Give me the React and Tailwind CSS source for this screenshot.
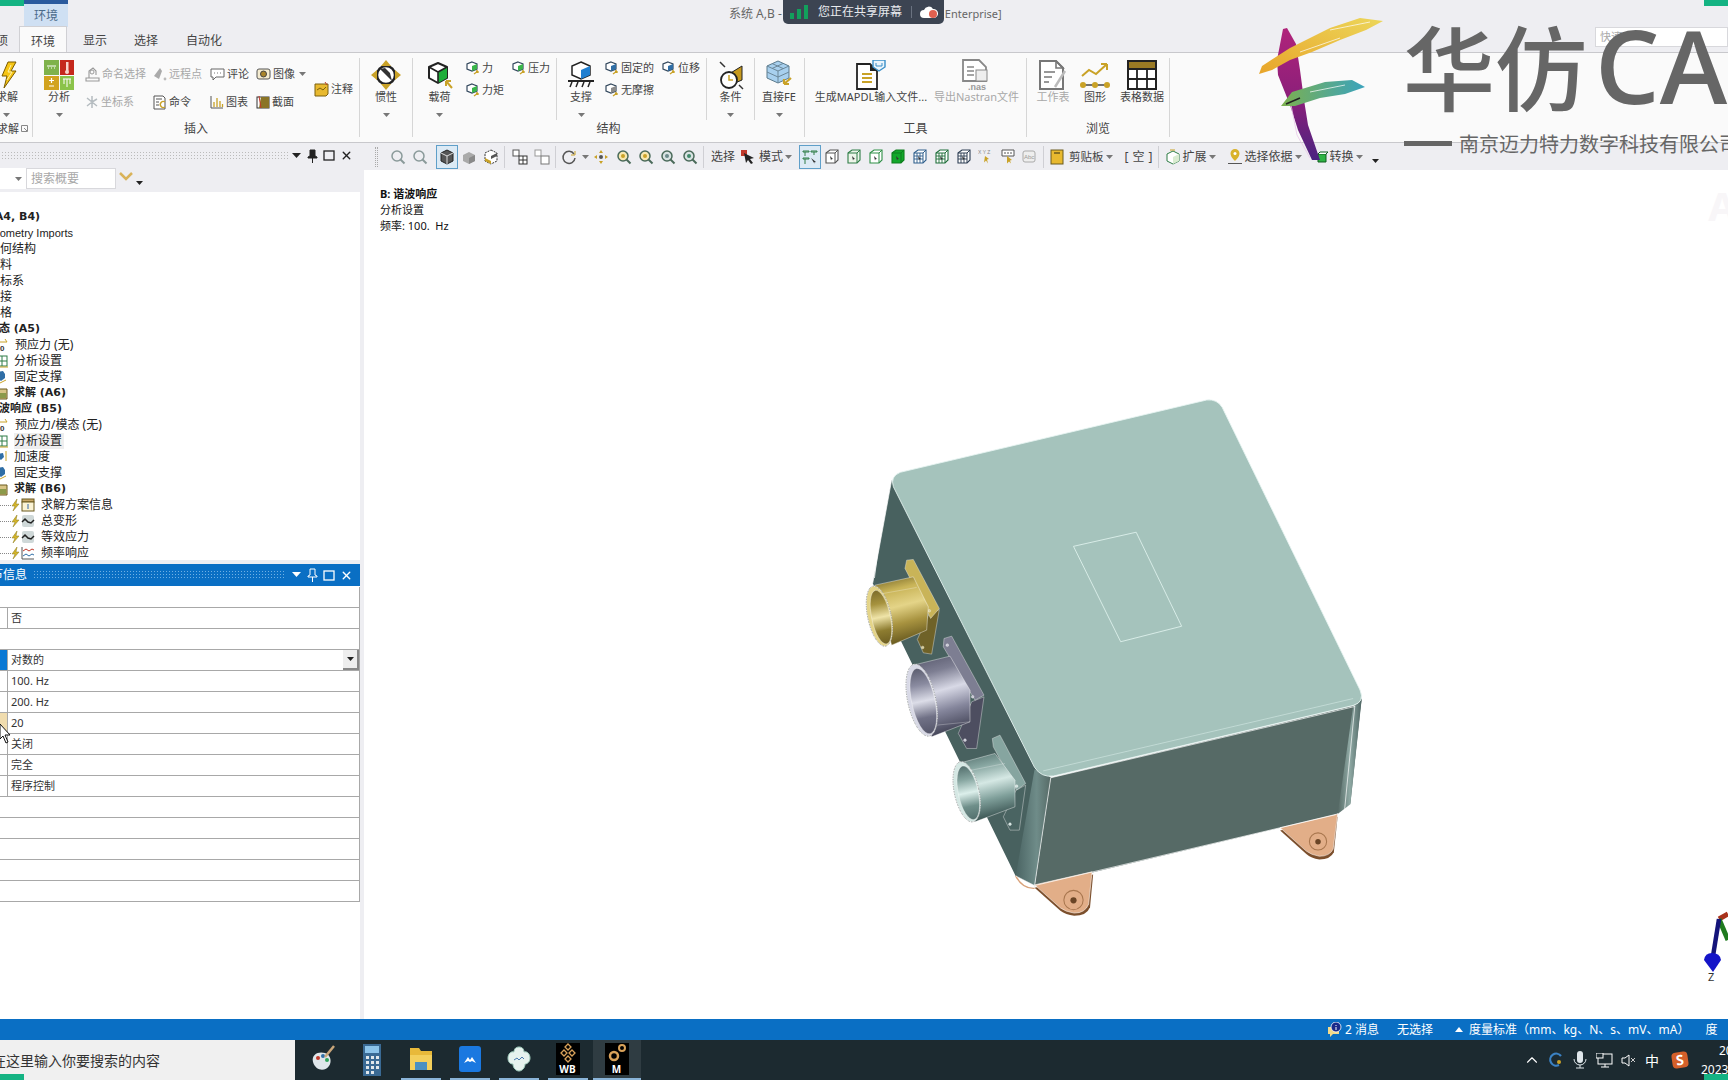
import React from 'react'
import { ChevronUp, X } from 'lucide-react'

const Svg = ({ w = 16, h = 16, vb, children }) => (
  <svg width={w} height={h} viewBox={vb || `0 0 ${w} ${h}`} className="block shrink-0">{children}</svg>
)

// ---- small drawn icons ----
const Caret = ({ dark }) => (
  <svg width="7" height="4" viewBox="0 0 7 4" className="block shrink-0"><path d="M0 0h7L3.5 4z" fill={dark ? '#222' : '#777'} /></svg>
)

const MiniCube = ({ face = '#39b54a', mark = '#c9a227' }) => (
  <Svg w={14} h={14}>
    <path d="M6 1l5 2v5l-5 2-5-2V3z" fill="#fff" stroke="#34495e" strokeWidth="1.2" />
    <path d="M6 5l5-2v5l-5 2z" fill={face} />
    <path d="M8 13l4-3M12 10l-2 0M12 10l0 2" stroke={mark} strokeWidth="1.3" fill="none" />
  </Svg>
)

const BigCube = ({ face = '#1fae3b', top = '#fff' }) => (
  <Svg w={26} h={28}>
    <path d="M11 2l9 4v11l-9 5-9-5V6z" fill={top} stroke="#222" strokeWidth="2" strokeLinejoin="round" />
    <path d="M11 11l9-5v11l-9 5z" fill={face} />
    <path d="M2 6l9 5 9-5M11 11v11" stroke="#222" strokeWidth="1.6" fill="none" />
    <path d="M25 27l-6-7M19 20h5M19 20v5" stroke="#c9a227" strokeWidth="2" fill="none" />
  </Svg>
)

const Mag = ({ c = '#8a9a9a', fill = 'none', mark }) => (
  <Svg w={16} h={16}>
    <circle cx="7" cy="7" r="5" fill={fill} stroke={c} strokeWidth="1.5" />
    <path d="M10.5 10.5l4 4" stroke={c} strokeWidth="2" />
    {mark && <circle cx="7" cy="7" r="2" fill={mark} />}
  </Svg>
)

const SelBox = ({ c = '#39a845', fill = '#fff', grid }) => (
  <Svg w={16} h={16}>
    <path d="M2 4l4-3h8v10l-3 3H2z" fill={fill} stroke={c} strokeWidth="1.1" />
    <path d="M2 4h9v10M11 4l3-3" stroke={c} strokeWidth="1" fill="none" />
    {grid && <path d="M5 4v10M8 4v10M2 7h9M2 10h9" stroke={c} strokeWidth="0.9" />}
    <path d="M6 7l3 3-1.5.3L7 11.5z" fill="#333" />
  </Svg>
)

const Lightning = () => (
  <Svg w={18} h={28}>
    <path d="M9 1h8l-5 9h5L5 27l3-12H3z" fill="#f6c515" stroke="#7a5b00" strokeWidth="1" />
    <path d="M12 4l-3 7h4L8 19" stroke="#fff2a8" strokeWidth="1" fill="none" />
  </Svg>
)

const AnalysisIcon = () => (
  <Svg w={30} h={30}>
    <rect x="0" y="0" width="15" height="15" fill="#7fb24b" />
    <rect x="16" y="0" width="14" height="15" fill="#c5281c" />
    <rect x="0" y="16" width="15" height="14" fill="#d2a31f" />
    <rect x="16" y="16" width="14" height="14" fill="#8bc34a" />
    <path d="M3 6h9M4 8h1M7 8h1M10 8h1" stroke="#fff" strokeWidth="1" />
    <rect x="22" y="2" width="2.5" height="9" fill="#f8d5cc" /><circle cx="23" cy="12" r="2" fill="#f8d5cc" />
    <path d="M7.500 18v5M5 20.500h5M5 26h5" stroke="#fff" strokeWidth="1.2" />
    <path d="M19 19h8M20 19v5M23 19v8M26 19v5" stroke="#fff" strokeWidth="1" />
  </Svg>
)

const NamedSel = () => (
  <Svg w={15} h={15}>
    <path d="M1 11h13v3H1zM4 11V4l4-3 3 3v4" fill="none" stroke="#999" strokeWidth="1.1" />
    <circle cx="7" cy="5" r="2" fill="none" stroke="#999" />
  </Svg>
)
const RemotePt = () => (
  <Svg w={14} h={14}><path d="M1 9l6-8 2 3-3 8z" fill="#aaa" /><circle cx="12" cy="12" r="1.400" fill="#bbb" /></Svg>
)
const Comment = () => (
  <Svg w={15} h={14}><path d="M1 2h13v8H6l-3 3v-3H1z" fill="#fff" stroke="#666" /><path d="M4 6h1M7 6h1M10 6h1" stroke="#777" /></Svg>
)
const Camera = () => (
  <Svg w={15} h={14}><rect x="1" y="2" width="13" height="10" rx="2" fill="#f5ecd0" stroke="#555" /><circle cx="7.500" cy="7" r="3" fill="#a9842a" stroke="#444" /></Svg>
)
const CoordSys = () => (
  <Svg w={14} h={14}><path d="M7 7V1M7 7l5-3M7 7l5 4M7 7v6M7 7L2 11M7 7L2 3" stroke="#b5bcc0" strokeWidth="1.5" /></Svg>
)
const CommandI = () => (
  <Svg w={14} h={15}><path d="M1 1h9l2 2v11H1z" fill="#fff" stroke="#555" /><path d="M3 4h6M3 7h3M3 10h3" stroke="#555" /><path d="M12 7a3 3 0 1 0 0 5" stroke="#c9a227" strokeWidth="1.400" fill="none" /></Svg>
)
const ChartI = () => (
  <Svg w={14} h={14}><path d="M1 1v12h12" stroke="#555" fill="none" /><path d="M4 12V7M7 12V3M10 12V6M12.500 12V9" stroke="#c9a227" strokeWidth="1.300" /></Svg>
)
const SectionI = () => (
  <Svg w={14} h={14}><rect x="1" y="2" width="12" height="11" fill="#fff" stroke="#333" /><path d="M5 2h8v11H3z" fill="#8a7426" /><path d="M3 1l2 12" stroke="#c0392b" /></Svg>
)
const NoteI = () => (
  <Svg w={15} h={15}><path d="M1 2h13v10l-2 2H1z" fill="#e8b92f" stroke="#7a6010" /><path d="M3 8l3-2 3 2 3-3" stroke="#7a6010" fill="none" /><path d="M11 0l2 3" stroke="#c0392b" /></Svg>
)
const InertiaI = () => (
  <Svg w={30} h={30}>
    <circle cx="15" cy="15" r="9" fill="#fff" stroke="#222" strokeWidth="2.400" />
    <path d="M9 9l5 5 7 7-2-8-5-5z" fill="#333" />
    <path d="M15 0l5 6h-10zM15 30l5-6h-10zM0 15l6-5v10zM30 15l-6-5v10z" fill="#c9a227" />
  </Svg>
)
const SupportI = () => (
  <Svg w={28} h={28}>
    <path d="M14 1l9 4v9l-9 4-9-4V5z" fill="#fff" stroke="#222" strokeWidth="1.500" />
    <path d="M14 9l9-4v9l-9 4z" fill="#1f7fd1" />
    <path d="M1 20h26" stroke="#222" strokeWidth="2" />
    <path d="M5 21l-2 5M11 21l-2 5M17 21l-2 5M23 21l-2 5" stroke="#222" strokeWidth="1.500" />
  </Svg>
)
const ConditionI = () => (
  <Svg w={26} h={30}>
    <path d="M2 2l5 5" stroke="#333" strokeWidth="1.500" />
    <path d="M11 14L24 6v14l-7 3z" fill="#c79a1e" stroke="#222" />
    <circle cx="11" cy="20" r="8" fill="#fff" stroke="#222" strokeWidth="1.800" />
    <path d="M11 15v5h4" stroke="#c9a227" strokeWidth="1.500" fill="none" />
    <path d="M25 29l-4-4" stroke="#333" strokeWidth="1.500" />
  </Svg>
)
const DirectFE = () => (
  <Svg w={26} h={30}>
    <path d="M12 1l11 5v12l-11 5-11-5V6z" fill="#a8d0ee" stroke="#5a7a8c" />
    <path d="M1 6l11 5 11-5M12 11v12M6 3.500l11 5M17 3.500l-11 5M1 12l11 5 11-5" stroke="#6b8799" fill="none" />
    <path d="M25 18l-7 6M18 24h5M18 24v-5" stroke="#c9a227" strokeWidth="2.200" fill="none" />
  </Svg>
)
const MapdlI = () => (
  <Svg w={30} h={30}>
    <path d="M1 4h13l7 7v18H1z" fill="#fff" stroke="#222" strokeWidth="1.800" />
    <path d="M14 4v7h7z" fill="#222" />
    <path d="M6 14h10M6 18h10M6 22h10" stroke="#c9a227" strokeWidth="2" />
    <path d="M17 0h12v7l-6 4-6-4z" fill="#eaf4fb" stroke="#3a8fc8" strokeWidth="1.400" />
    <path d="M20 3v3h6V3" stroke="#3a8fc8" fill="none" />
  </Svg>
)
const NastranI = () => (
  <Svg w={30} h={32}>
    <path d="M1 1h16l7 7v14H1z" fill="#fff" stroke="#888" strokeWidth="1.800" />
    <path d="M5 8h7M5 12h7M5 16h7" stroke="#888" strokeWidth="1.400" />
    <rect x="14" y="11" width="11" height="11" fill="#eee" stroke="#888" />
    <text x="6" y="31" fontSize="9" fontWeight="700" fill="#999" fontFamily="Liberation Sans">.nas</text>
  </Svg>
)
const SheetI = () => (
  <Svg w={28} h={30}>
    <path d="M1 1h16l7 7v21H1z" fill="#fff" stroke="#777" strokeWidth="2" />
    <path d="M17 1v7h7zM5 12h11M5 17h8M5 22h5" stroke="#777" strokeWidth="1.600" fill="none" />
    <path d="M26 11L16 27" stroke="#bbb" strokeWidth="2.500" />
  </Svg>
)
const GraphI = () => (
  <Svg w={30} h={30}>
    <path d="M2 16l7-6 7 4 11-10M27 4h-6M27 4v6" stroke="#c9a227" strokeWidth="2" fill="none" />
    <path d="M1 25h28" stroke="#444" strokeWidth="1.500" />
    <circle cx="3" cy="25" r="3" fill="#c9a227" /><circle cx="15" cy="25" r="3" fill="#c9a227" /><circle cx="27" cy="25" r="3" fill="#c9a227" />
  </Svg>
)
const TableI = () => (
  <Svg w={30} h={30}>
    <rect x="1" y="1" width="28" height="28" fill="#fff" stroke="#222" strokeWidth="2" />
    <rect x="1" y="1" width="28" height="8" fill="#9a7a24" stroke="#222" strokeWidth="2" />
    <path d="M10 9v20M20 9v20M1 19h28" stroke="#222" strokeWidth="1.800" />
  </Svg>
)

// ---- tree icons ----
const TPre = () => (
  <Svg w={8} h={14}><path d="M0 4h7M5 1l2 3" stroke="#c9a227" /><text x="0" y="13" fontSize="8" fontWeight="700" fill="#333" fontFamily="Liberation Sans">0</text></Svg>
)
const TSet = () => (
  <Svg w={9} h={14}><rect x="-2" y="2" width="9" height="10" fill="#fff" stroke="#2e7d46" /><path d="M2 2v10M-2 7h9" stroke="#2e7d46" /><path d="M-2 13h10" stroke="#c9a227" /></Svg>
)
const TFix = () => (
  <Svg w={9} h={14}><path d="M-2 2l5-1 2 3v4l-4 3-3-2z" fill="#2f6ea6" /><path d="M0 13l6-3" stroke="#c9a227" /></Svg>
)
const TAcc = () => (
  <Svg w={9} h={14}><path d="M-2 4l5-1 1 4-3 3-3-2z" fill="#2f6ea6" /><path d="M6 1v10" stroke="#c9a227" /></Svg>
)
const TSol = () => (
  <Svg w={9} h={14}><path d="M-1 3h8v10h-8z" fill="#d8c486" stroke="#6b5a1e" /><rect x="0" y="7" width="6" height="5" fill="#8b9a4a" /></Svg>
)
const Bolt = () => (
  <Svg w={9} h={14}><path d="M6 1L1 8h3l-2 5 6-7H5z" fill="#d4b52b" stroke="#8a7a1a" strokeWidth="0.500" /></Svg>
)
const RInfo = () => (
  <Svg w={14} h={14}><rect x="1" y="1" width="12" height="3" fill="#c9a86a" stroke="#6b5a1e" /><rect x="1" y="4" width="12" height="9" fill="#fbf3d5" stroke="#6b5a1e" /><path d="M7 6v5" stroke="#3366aa" /></Svg>
)
const RWave = () => (
  <Svg w={14} h={14}><rect x="1" y="1" width="12" height="12" rx="2" fill="#cfd8d8" /><path d="M1 8l3-3 3 3 3 1 3-3" stroke="#222" strokeWidth="1.500" fill="none" /></Svg>
)
const RFreq = () => (
  <Svg w={14} h={14}><path d="M1 1v12h12" stroke="#555" fill="none" /><path d="M2 5l3-2 3 2 3-2 2 1" stroke="#c0392b" fill="none" /><path d="M2 10l3-2 3 2 3-2 2 1" stroke="#2f6ea6" fill="none" /></Svg>
)

const boldRow = "font-bold text-[11px] font-['DejaVu_Sans','Noto_Sans_CJK_SC',sans-serif]"

const treeRows = [
  { text: '模型 (A4, B4)', cls: `-ml-[36px] ${boldRow}` },
  { text: 'Geometry Imports', cls: "-ml-[15px] text-[11px] font-['Liberation_Sans',sans-serif]" },
  { text: '几何结构', cls: '-ml-[12px]' },
  { text: '材料', cls: '-ml-[12px]' },
  { text: '坐标系', cls: '-ml-[12px]' },
  { text: '连接', cls: '-ml-[12px]' },
  { text: '网格', cls: '-ml-[12px]' },
  { text: '模态 (A5)', cls: `-ml-[12px] ${boldRow}` },
  { text: '预应力 (无)', icon: <TPre />, cls: 'ml-[6px]' },
  { text: '分析设置', icon: <TSet />, cls: 'ml-[5px]' },
  { text: '固定支撑', icon: <TFix />, cls: 'ml-[5px]' },
  { text: '求解 (A6)', icon: <TSol />, cls: `ml-[5px] ${boldRow}` },
  { text: '谐波响应 (B5)', cls: `-ml-[12px] ${boldRow}` },
  { text: '预应力/模态 (无)', icon: <TPre />, cls: 'ml-[6px]' },
  { text: '分析设置', icon: <TSet />, cls: 'ml-[5px] bg-[#eeeeee] pr-[2px]' },
  { text: '加速度', icon: <TAcc />, cls: 'ml-[5px]' },
  { text: '固定支撑', icon: <TFix />, cls: 'ml-[5px]' },
  { text: '求解 (B6)', icon: <TSol />, cls: `ml-[5px] ${boldRow}` },
]
const resultRows = [
  { text: '求解方案信息', icon: <RInfo /> },
  { text: '总变形', icon: <RWave /> },
  { text: '等效应力', icon: <RWave /> },
  { text: '频率响应', icon: <RFreq /> },
]

const detailRows = [
  { v: '' },
  { v: '否', sep: true },
  { v: '' },
  { v: '对数的', sep: true, blue: true, combo: true },
  { v: '100. Hz', sep: true },
  { v: '200. Hz', sep: true },
  { v: '20', sep: true, hot: true },
  { v: '关闭', sep: true },
  { v: '完全', sep: true },
  { v: '程序控制', sep: true },
  { v: '' }, { v: '' }, { v: '' }, { v: '' }, { v: '' },
]

// ---- ribbon pieces ----
const BigBtn = ({ w, icon, label, gray, caret = true }) => (
  <div className={`flex flex-col items-center pt-[2px] ${w}`}>
    <div className="h-[30px] flex items-center justify-center">{icon}</div>
    <div className={`h-[14px] leading-[14px] whitespace-nowrap ${gray ? 'text-[#a8a8a8]' : 'text-[#444]'}`}>{label}</div>
    {caret && <div className="mt-[9px]"><Caret /></div>}
  </div>
)

const Small = ({ icon, label, gray, caret, cls = '' }) => (
  <div className={`flex items-center gap-[2px] whitespace-nowrap ${gray ? 'text-[#a8a8a8]' : 'text-[#444]'} ${cls}`}>
    {icon}<span>{label}</span>{caret && <span className="ml-[2px]"><Caret /></span>}
  </div>
)

const GroupLabel = ({ children }) => (
  <div className="h-[17px] leading-[17px] text-center text-[#444] text-[12px]">{children}</div>
)

const Ribbon = () => (
  <div className="h-[90px] bg-[#fafafa] border-b border-[#c8c8cc] flex py-[5px] text-[11px] shrink-0">
    {/* solve */}
    <div className="w-[33px] border-r border-[#d6d6d6] flex flex-col">
      <div className="h-[62px] -ml-[1px] relative">
        <div className="pt-[2px]">
          <div className="h-[30px] flex items-center"><Lightning /></div>
          <div className="h-[14px] leading-[14px] text-[#444] -ml-[3px]">求解</div>
          <div className="mt-[9px] ml-[4px]"><Caret /></div>
        </div>
      </div>
      <div className="h-[17px] leading-[17px] text-[#444] text-[11px] flex items-center -ml-[3px] gap-[2px]">
        <span>求解</span>
        <svg width="7" height="7" viewBox="0 0 7 7" className="block shrink-0"><path d="M0.500 0.500h6v6h-6zM3 3l3 3" stroke="#888" fill="none" /></svg>
      </div>
    </div>
    {/* insert */}
    <div className="w-[327px] border-r border-[#d6d6d6] flex flex-col">
      <div className="h-[62px] flex">
        <BigBtn w="w-[52px]" icon={<AnalysisIcon />} label="分析" />
        <div className="grid grid-cols-[68px_57px_46px_58px] grid-rows-[28px_28px] pt-[2px]">
          <Small icon={<NamedSel />} label="命名选择" gray />
          <Small icon={<RemotePt />} label="远程点" gray />
          <Small icon={<Comment />} label="评论" />
          <Small icon={<Camera />} label="图像" caret />
          <Small icon={<CoordSys />} label="坐标系" gray />
          <Small icon={<CommandI />} label="命令" />
          <Small icon={<ChartI />} label="图表" />
          <Small icon={<SectionI />} label="截面" />
        </div>
        <Small icon={<NoteI />} label="注释" cls="h-[60px] pt-[2px]" />
      </div>
      <GroupLabel>插入</GroupLabel>
    </div>
    {/* inertia */}
    <div className="w-[53px] border-r border-[#d6d6d6] flex flex-col">
      <BigBtn w="w-full" icon={<InertiaI />} label="惯性" />
    </div>
    {/* structure */}
    <div className="w-[392px] border-r border-[#d6d6d6] flex flex-col">
      <div className="h-[62px] flex">
        <BigBtn w="w-[53px]" icon={<BigCube />} label="载荷" />
        <div className="w-[46px] flex flex-col gap-[6px] pt-[2px]">
          <Small icon={<MiniCube />} label="力" cls="h-[16px]" />
          <Small icon={<MiniCube />} label="力矩" cls="h-[16px]" />
        </div>
        <div className="w-[45px] border-r border-[#d6d6d6] pt-[2px]">
          <Small icon={<MiniCube />} label="压力" cls="h-[16px]" />
        </div>
        <BigBtn w="w-[48px]" icon={<SupportI />} label="支撑" />
        <div className="w-[57px] flex flex-col gap-[6px] pt-[2px]">
          <Small icon={<MiniCube face="#2f6ea6" />} label="固定的" cls="h-[16px]" />
          <Small icon={<MiniCube face="#8a8a8a" />} label="无摩擦" cls="h-[16px]" />
        </div>
        <div className="w-[45px] border-r border-[#d6d6d6] pt-[2px]">
          <Small icon={<MiniCube face="#2f6ea6" />} label="位移" cls="h-[16px]" />
        </div>
        <div className="border-r border-[#d6d6d6]"><BigBtn w="w-[47px]" icon={<ConditionI />} label="条件" /></div>
        <BigBtn w="w-[48px]" icon={<DirectFE />} label="直接FE" />
      </div>
      <GroupLabel>结构</GroupLabel>
    </div>
    {/* tools */}
    <div className="w-[222px] border-r border-[#d6d6d6] flex flex-col">
      <div className="h-[62px] flex pl-[9px] gap-[6px]">
        <BigBtn w="w-[114px]" icon={<MapdlI />} label="生成MAPDL输入文件..." caret={false} />
        <BigBtn w="w-[85px]" icon={<NastranI />} label="导出Nastran文件" gray caret={false} />
      </div>
      <GroupLabel>工具</GroupLabel>
    </div>
    {/* browse */}
    <div className="w-[143px] border-r border-[#d6d6d6] flex flex-col">
      <div className="h-[62px] flex pl-[9px] gap-[10px]">
        <BigBtn w="w-[34px]" icon={<SheetI />} label="工作表" gray caret={false} />
        <BigBtn w="w-[30px]" icon={<GraphI />} label="图形" caret={false} />
        <BigBtn w="w-[44px]" icon={<TableI />} label="表格数据" caret={false} />
      </div>
      <GroupLabel>浏览</GroupLabel>
    </div>
  </div>
)

// ---- graphics toolbar ----
const Slot = ({ children, active, cls = '' }) => (
  <div className={`w-[22px] h-[24px] flex items-center justify-center shrink-0 ${active ? 'border border-[#5f9fc9] bg-[#dceaf5]' : ''} ${cls}`}>{children}</div>
)
const TSep = ({ cls = '' }) => <div className={`w-px h-[22px] bg-[#cfcfd4] shrink-0 ${cls}`} />

const Toolbar = () => (
  <div className="h-[27px] flex items-center text-[12px] text-[#444] whitespace-nowrap shrink-0">
    <div className="ml-[11px] w-[3px] h-[20px] border-x border-dotted border-[#aaa]" />
    <div className="ml-[9px] flex"><Slot><Mag /></Slot><Slot><Mag /></Slot></div>
    <Slot active cls="ml-[5px]"><Svg w={16} h={16}><path d="M8 1l6 3v8l-6 3-6-3V4z" fill="#555" stroke="#222" /><path d="M2 4l6 3 6-3M8 7v8" stroke="#ddd" fill="none" /></Svg></Slot>
    <Slot><Svg w={16} h={16}><path d="M8 3l6 3v6l-6 3-6-3V6z" fill="#aaa" /><path d="M8 9l6-3v6l-6 3z" fill="#8a8a8a" /></Svg></Slot>
    <Slot><Svg w={16} h={16}><path d="M8 1l6 3v8l-6 3-6-3V4z" fill="#fff" stroke="#333" strokeDasharray="2 1" /><path d="M2 9l6 3v3l-6-3z" fill="#c9a227" /><path d="M8 7l6-3v3l-6 3z" fill="#555" /></Svg></Slot>
    <TSep cls="ml-[2px]" />
    <Slot cls="ml-[4px]"><Svg w={16} h={16}><rect x="1" y="1" width="6" height="6" fill="#fff" stroke="#555" /><rect x="7" y="7" width="8" height="8" fill="#fff" stroke="#333" /><path d="M7 11h8M11 7v8" stroke="#333" /></Svg></Slot>
    <Slot><Svg w={16} h={16}><rect x="1" y="1" width="6" height="6" fill="#fff" stroke="#999" /><rect x="7" y="7" width="8" height="8" fill="#fff" stroke="#777" /></Svg></Slot>
    <TSep cls="ml-[2px]" />
    <Slot cls="ml-[2px]"><Svg w={16} h={16}><path d="M13 5a6 6 0 1 0 1 4" fill="none" stroke="#555" strokeWidth="1.500" /><path d="M14 2v4h-4" fill="none" stroke="#c9a227" /></Svg></Slot>
    <div className="w-[10px] flex justify-center"><Caret /></div>
    <Slot><Svg w={16} h={16}><path d="M8 1l2 3H6zM8 15l2-3H6zM1 8l3-2v4zM15 8l-3-2v4z" fill="#c9a227" /><circle cx="8" cy="8" r="2" fill="#555" /></Svg></Slot>
    <Slot cls="ml-px"><Mag c="#4a6a5a" fill="#f8e8b0" mark="#c9a227" /></Slot>
    <Slot><Mag c="#4a6a5a" fill="#f8e8b0" mark="#c9a227" /></Slot>
    <Slot><Mag c="#4a6a5a" fill="#d8e2e2" mark="#6b8a8a" /></Slot>
    <Slot><Mag c="#4a6a5a" fill="#d8e2e2" mark="#3f8a6a" /></Slot>
    <TSep cls="ml-[2px]" />
    <span className="ml-[7px]">选择</span>
    <div className="ml-[6px] w-[14px]"><Svg w={14} h={14}><rect x="0" y="0" width="6" height="6" fill="#c0392b" /><path d="M3 3l10 5-4 1 3 4-2 1-3-4-2 3z" fill="#222" /></Svg></div>
    <span className="ml-[4px]">模式</span>
    <span className="ml-[2px]"><Caret /></span>
    <Slot active cls="ml-[7px]"><Svg w={16} h={16}><path d="M1 2h6v1H1zM9 2h6v1H9zM1 9h6v1H1zM3 3v4M12 3v3M3 10v5" stroke="#2e7d46" fill="none" /><path d="M9 9l5 4-2 .5 1 2z" fill="#333" /></Svg></Slot>
    <Slot><SelBox c="#555" /></Slot>
    <Slot><SelBox c="#2e7d46" fill="#eef5ea" /></Slot>
    <Slot><SelBox c="#2e8f46" /></Slot>
    <Slot><SelBox c="#0f7d1e" fill="#12a82a" /></Slot>
    <Slot><SelBox c="#2f5f8c" grid /></Slot>
    <Slot><SelBox c="#1f6f3a" grid /></Slot>
    <Slot><SelBox c="#2e3f55" grid /></Slot>
    <Slot><Svg w={16} h={16}><text x="0" y="5" fontSize="5" fill="#888" fontFamily="Liberation Sans">X Y Z</text><path d="M7 7l4 3-2 .5 1 4-2-3-2 2z" fill="#c9a227" /></Svg></Slot>
    <Slot><Svg w={16} h={16}><path d="M2 1h12v6H2z" fill="#fff" stroke="#555" /><path d="M4 4h8" stroke="#555" strokeDasharray="2 1" /><path d="M7 7l5 4-2 .5 1 3-2-2-2 2z" fill="#c9a227" /></Svg></Slot>
    <Slot><Svg w={16} h={16}><rect x="1" y="2" width="12" height="11" rx="2" fill="#eee" stroke="#aaa" /><text x="2" y="10" fontSize="6" fill="#999" fontFamily="Liberation Sans">Abc</text></Svg></Slot>
    <TSep cls="ml-[2px]" />
    <div className="ml-[6px] w-[14px]"><Svg w={14} h={16}><rect x="1" y="1" width="12" height="14" fill="#e8b92f" stroke="#6b5a1e" /><path d="M4 4h6" stroke="#6b5a1e" strokeWidth="1.500" /></Svg></div>
    <span className="ml-[5px] text-[11.500px]">剪贴板</span>
    <span className="ml-[2px]"><Caret /></span>
    <span className="ml-[12px] w-[28px] flex justify-between"><span>[</span><span>空</span><span>]</span></span>
    <TSep cls="ml-[5px]" />
    <div className="ml-[7px] w-[15px]"><Svg w={15} h={16}><path d="M7 2l6 3v7l-6 3-6-3V5z" fill="#fff" stroke="#2e7d46" /><path d="M7 8l6-3v7l-6 3z" fill="#d9ecd0" /><path d="M4 1h5" stroke="#c9a227" /></Svg></div>
    <span className="ml-[2px]">扩展</span>
    <span className="ml-[2px]"><Caret /></span>
    <div className="ml-[12px] w-[14px]"><Svg w={14} h={17}><path d="M7 1a4.500 4.500 0 0 1 4.500 4.500C11.500 9 7 13 7 13S2.500 9 2.500 5.500A4.500 4.500 0 0 1 7 1z" fill="#d9b22b" /><circle cx="7" cy="5.500" r="1.500" fill="#fff" /><path d="M0 15.500h14" stroke="#555" /></Svg></div>
    <span className="ml-[3px]">选择依据</span>
    <span className="ml-[2px]"><Caret /></span>
    <div className="ml-[14px] w-[12px]"><Svg w={12} h={12}><path d="M2 3h8v8H2z" fill="#2fb344" stroke="#0f5d1e" /><path d="M2 3l2-2h8l-2 2" fill="#fff" stroke="#0f5d1e" /></Svg></div>
    <span className="ml-[2px]">转换</span>
    <span className="ml-[2px]"><Caret /></span>
    <span className="ml-[9px] mt-[8px]"><Caret dark /></span>
  </div>
)

// ---- pane header buttons ----
const PaneBtns = ({ light }) => {
  const c = light ? '#fff' : '#222'
  return (
    <div className="flex items-center gap-[5px] pr-[7px]">
      <Svg w={11} h={6}><path d="M1 0h9L5.500 5z" fill={c} /></Svg>
      <Svg w={11} h={14}><path d="M3 1h5v6l2 1v1H1V8l2-1zM5.500 9v5" stroke={c} fill={light ? 'none' : c} /></Svg>
      <Svg w={12} h={11}><rect x="1" y="1" width="10" height="9" fill="none" stroke={c} strokeWidth="1.300" /></Svg>
      <X size={13} strokeWidth={2.600} color={c} className="shrink-0" />
    </div>
  )
}

const LeftPanel = () => (
  <div className="w-[364px] shrink-0 bg-[#eeeef2] flex flex-col pr-[4px] text-[12px] text-[#222]">
    <div className="h-[25px] flex items-center justify-end">
      <div className="flex-1 h-[10px] mx-[1px] bg-[radial-gradient(#bbb_0.6px,transparent_0.8px)] bg-[length:3px_3px]" />
      <PaneBtns />
    </div>
    <div className="h-[24px] flex items-start">
      <div className="w-[26px] h-[21px] bg-white flex items-center justify-end pr-[4px]"><Caret /></div>
      <div className="w-[90px] h-[21px] bg-white border border-[#d8d8dc] pl-[4px] leading-[19px] text-[#a8a8a8]">搜索概要</div>
      <div className="ml-[3px] mt-[3px]"><Svg w={14} h={12}><path d="M1 2l6 6 6-6" stroke="#d9b35a" strokeWidth="2.500" fill="none" /></Svg></div>
      <div className="ml-[3px] mt-[13px]"><Caret dark /></div>
    </div>
    <div className="h-[368px] bg-white pt-[17px] overflow-hidden">
      {treeRows.map((r, i) => (
        <div key={i} className="h-[16px] leading-[16px] flex items-center whitespace-nowrap">
          {r.icon && <div className="w-[9px] shrink-0">{r.icon}</div>}
          <span className={r.cls}>{r.text}</span>
        </div>
      ))}
      {resultRows.map((r, i) => (
        <div key={i} className="h-[16px] leading-[16px] flex items-center whitespace-nowrap">
          <div className="w-[11px] border-t border-dotted border-[#888]" />
          <Bolt />
          <div className="ml-[1px] w-[14px]">{r.icon}</div>
          <span className="ml-[6px]">{r.text}</span>
        </div>
      ))}
    </div>
    <div className="h-[4px]" />
    <div className="h-[22px] bg-[#0a6fc4] flex items-center text-white overflow-hidden">
      <span className="-ml-[21px] leading-[22px] whitespace-nowrap">细节信息</span>
      <div className="flex-1 h-[10px] mx-[6px] bg-[radial-gradient(#6fb0e4_0.6px,transparent_0.8px)] bg-[length:3px_3px]" />
      <PaneBtns light />
    </div>
    <div className="flex-1 bg-white pt-px">
      <div className="border-r border-[#a8a8a8] text-[11px] text-[#333]">
        {detailRows.map((r, i) => (
          <div key={i} className="h-[21px] border-b border-[#a8a8a8] flex">
            <div className={`w-[8px] shrink-0 relative overflow-hidden ${r.sep ? 'border-r border-[#a8a8a8]' : ''} ${r.blue ? 'bg-[#0a78d4]' : ''} ${r.hot ? 'bg-[#f0dcae]' : ''}`} />
            <div className="flex-1 pl-[3px] leading-[20px] relative">
              {r.v}
              {r.combo && (
                <div className="absolute right-0 top-0 w-[16px] h-[20px] bg-[#eeeeee] border-r-2 border-b-2 border-[#888] flex items-center justify-center"><Caret dark /></div>
              )}
            </div>
          </div>
        ))}
      </div>
    </div>
  </div>
)

// ---- the 3D model, drawn in its own coordinate box ----
const Connector = ({ id, stops, innerStops, strip, lower, lowerFill, body, cx, cy, rx, ry, seam, holes, dot }) => (
  <g>
    <defs>
      <linearGradient id={id} x1="0" y1="0" x2="0.2" y2="1">
        {stops.map((s, i) => <stop key={i} offset={i / (stops.length - 1)} stopColor={s} />)}
      </linearGradient>
      <linearGradient id={`${id}In`} x1="0" y1="0" x2="0" y2="1">
        {innerStops.map((s, i) => <stop key={i} offset={i / (innerStops.length - 1)} stopColor={s} />)}
      </linearGradient>
    </defs>
    <polygon points={lower} fill={lowerFill} stroke="#f2f2f2" strokeWidth="1.200" />
    <polygon points={strip} fill={stops[1]} stroke="#f2f2f2" strokeWidth="1.200" />
    {holes.map((h, i) => <circle key={i} cx={h[0]} cy={h[1]} r="4" fill={dot} stroke="#fff" strokeWidth="1" />)}
    <path d={body} fill={`url(#${id})`} stroke="#fff" strokeWidth="1.200" />
    <path d={seam} stroke="#fff" strokeWidth="1" fill="none" opacity="0.8" />
    <ellipse cx={cx} cy={cy} rx={rx} ry={ry} transform={`rotate(-12 ${cx} ${cy})`} fill={stops[2]} stroke="#fff" strokeWidth="2" />
    <ellipse cx={cx} cy={cy} rx={rx} ry={ry} transform={`rotate(-12 ${cx} ${cy})`} fill="none" stroke="#1c2422" strokeWidth="1.500" strokeDasharray="2 3" />
    <ellipse cx={cx + 5} cy={cy + 3} rx={rx - 7} ry={ry - 10} transform={`rotate(-12 ${cx + 5} ${cy + 3})`} fill={`url(#${id}In)`} stroke="#fff" strokeWidth="1" />
  </g>
)

const Model = () => (
  <svg width="540" height="540" viewBox="0 0 1568 1568" className="block ml-[476px] mt-[146px]">
    <defs>
      <linearGradient id="edgeL" x1="0" y1="0" x2="1" y2="0"><stop offset="0" stopColor="#4a6463" /><stop offset="0.6" stopColor="#6f8c89" /><stop offset="1" stopColor="#566a66" /></linearGradient>
      <linearGradient id="edgeR" x1="0" y1="0" x2="1" y2="0"><stop offset="0" stopColor="#566a66" /><stop offset="0.5" stopColor="#8fa9a4" /><stop offset="1" stopColor="#4f6664" /></linearGradient>
    </defs>
    {/* lugs go under the body */}
    <path d="M565 1474L735 1436L726 1531Q716 1556 680 1556Q655 1552 640 1541Z" fill="#7c4f2c" />
    <path d="M1278 1308L1445 1268L1434 1371Q1424 1392 1392 1392Q1368 1388 1354 1376Z" fill="#7c4f2c" />
    {/* side faces */}
    <polygon points="150,290 590,1135 612,1155 565,1468 510,1440 95,590" fill="#48615f" />
    <polygon points="612,1155 1495,945 1515,925 1510,965 1482,1230 1440,1262 565,1470" fill="#566a66" />
    <polygon points="565,1130 612,1155 565,1468 510,1440" fill="url(#edgeL)" />
    <polygon points="1490,948 1515,925 1482,1232 1445,1260" fill="url(#edgeR)" />
    <path d="M510 1440Q530 1478 565 1476" stroke="#d9a27a" strokeWidth="4" fill="none" />
    {/* lugs */}
    <path d="M565 1466L732 1428L722 1522Q712 1548 680 1548Q655 1544 640 1533Z" fill="#e2ae88" stroke="#fff" strokeWidth="1.500" />
    <path d="M1278 1300L1445 1260L1432 1362Q1422 1383 1392 1383Q1368 1379 1354 1368Z" fill="#e2ae88" stroke="#fff" strokeWidth="1.500" />
    <circle cx="678" cy="1510" r="28" fill="none" stroke="#a8764e" strokeWidth="3" />
    <circle cx="678" cy="1511" r="9" fill="#6a4526" />
    <circle cx="1388" cy="1340" r="25" fill="none" stroke="#a8764e" strokeWidth="3" />
    <circle cx="1388" cy="1341" r="8" fill="#6a4526" />
    {/* top */}
    <path d="M175 268L1065 58Q1095 55 1110 80L1510 900Q1525 935 1490 945L620 1150Q585 1155 565 1125L155 310Q145 280 175 268Z" fill="#a5c3bc" stroke="#e8f5f2" strokeWidth="2.500" />
    <path d="M612 1155L1495 948" stroke="#fff" strokeWidth="2" />
    <path d="M590 1135L1490 925" stroke="#dcefeb" strokeWidth="1.500" />
    <polygon points="678,483 860,442 992,715 815,760" fill="none" stroke="#e0f2ee" strokeWidth="2.500" />
    {/* edges */}
    <path d="M150 290L95 590M135 300L100 575M612 1155L565 1468L1440 1262M565 1468L510 1440M1495 945L1465 1250" stroke="#fff" strokeWidth="2" fill="none" />
    {/* connectors use the close-up's coordinates */}
    <g transform="translate(58 494) scale(0.968)">
      <Connector id="gold" stops={['#6e5f22', '#c9b458', '#e4d488', '#a89340', '#6e5f22']} innerStops={['#7d6d2a', '#a6923e', '#efe4a8', '#8d7c30', '#6e5f22']}
        strip="135,55 140,30 160,28 238,175 212,205" lower="238,178 215,312 190,308 172,268 205,195" lowerFill="#6f6228"
        body="M45 105L160 80L205 170L200 240L95 285Z" seam="M70 130L170 112" cx={58} cy={198} rx={35} ry={92} holes={[[208, 182], [188, 292]]} dot="#d8cf9a" />
      <Connector id="silver" stops={['#55566a', '#7d7e92', '#d8d9e6', '#85869c', '#4a4b5e']} innerStops={['#5c5e70', '#8a8ba0', '#dcdde8', '#707186', '#55566a']}
        strip="250,290 252,265 275,258 372,435 345,450" lower="372,440 350,595 320,595 295,550 335,455" lowerFill="#4d4e60"
        body="M160 345L270 318L330 420L330 515L215 560Z" seam="M230 525L330 515" cx={185} cy={450} rx={42} ry={110} holes={[[262, 285], [338, 440], [315, 570]]} dot="#c8c8d4" />
      <Connector id="teal" stops={['#4f6a68', '#86a5a0', '#d5e8e4', '#7f9f9a', '#405a58']} innerStops={['#54706e', '#86a5a0', '#dcefeb', '#6f8f8a', '#54706e']}
        strip="400,590 397,565 420,555 497,700 470,720" lower="497,705 478,840 450,840 430,800 468,720" lowerFill="#4a6462"
        body="M295 640L405 610L465 690L465 770L345 815Z" seam="M335 660L435 640" cx={320} cy={725} rx={37} ry={92} holes={[[470, 708], [450, 822]]} dot="#cfe0dc" />
    </g>
  </svg>
)

const Triad = () => (
  <div className="absolute right-0 top-[738px] w-[26px] h-[74px]">
    <svg width="26" height="64" viewBox="0 0 26 64" className="block">
      <path d="M17 11L26 6" stroke="#a8321c" strokeWidth="5" />
      <path d="M17 11L26 32" stroke="#1f7a1f" strokeWidth="5" />
      <path d="M17 11L11 48" stroke="#14147a" strokeWidth="4.500" />
      <path d="M11 64L2 52Q3 45 10 45Q18 45 19 52Z" fill="#1414c8" />
    </svg>
    <div className="text-[11px] text-[#333] leading-[10px] ml-[6px]">Z</div>
  </div>
)

const Viewport = () => (
  <div className="flex-1 bg-white relative overflow-hidden">
    <div className="pt-[16px] pl-[16px] h-[64px] text-[11px] leading-[16px] text-[#111]">
      <div className="font-bold">B: 谐波响应</div>
      <div>分析设置</div>
      <div>频率: 100.&nbsp; Hz</div>
    </div>
    <div className="absolute right-[-8px] top-[14px] text-[40px] leading-[44px] font-bold text-[#f8f6f8]">A</div>
    <Model />
    <Triad />
  </div>
)

// ---- watermark sits over the ribbon ----
const Watermark = () => (
  <div className="absolute left-[1250px] top-[14px] w-[478px] h-[150px] overflow-hidden pointer-events-none">
    <svg width="140" height="150" viewBox="1250 14 140 150" className="absolute left-0 top-0">
      <defs>
        <linearGradient id="stem" x1="0" y1="0" x2="0" y2="1"><stop offset="0" stopColor="#b0237a" /><stop offset="0.55" stopColor="#8a1f7a" /><stop offset="1" stopColor="#4a2480" /></linearGradient>
        <linearGradient id="ybar" x1="0" y1="1" x2="1" y2="0"><stop offset="0" stopColor="#e8a52a" /><stop offset="1" stopColor="#ecd65a" /></linearGradient>
        <linearGradient id="gbar" x1="0" y1="0" x2="1" y2="0"><stop offset="0" stopColor="#7db04e" /><stop offset="1" stopColor="#3aa3bd" /></linearGradient>
      </defs>
      <path d="M1283 29L1287 28L1296 44L1300 70L1304 100L1308 125L1320 160L1312 160L1298 130L1290 105L1278 75L1277 60Z" fill="url(#stem)" />
      <path d="M1290 100L1297 135L1310 158" stroke="#e8c8e8" strokeWidth="1" fill="none" opacity="0.8" />
      <path d="M1259 74L1262 66L1290 48L1330 28L1360 18L1383 21L1366 30L1340 40L1312 52L1290 60L1272 70Z" fill="url(#ybar)" />
      <path d="M1281 106L1292 92L1325 82L1352 80L1365 87L1345 94L1320 98L1295 106Z" fill="url(#gbar)" />
      <path d="M1330 30L1370 22M1300 52L1340 38M1310 92L1345 85" stroke="#fff" strokeWidth="1" opacity="0.7" />
      <path d="M1286 104L1300 98" stroke="#222" strokeWidth="1.500" />
    </svg>
    <div className="absolute left-[153px] top-[-5px] text-[#666] text-[92px] leading-[110px] whitespace-nowrap font-medium font-['Noto_Sans_CJK_SC',sans-serif] flex items-baseline">
      <span>华仿</span>
      <span className="ml-[8px] text-[102px] font-semibold font-['Open_Sans',sans-serif]">CAE</span>
    </div>
    <div className="absolute left-[154px] top-[127px] w-[48px] h-[5px] bg-[#666]" />
    <div className="absolute left-[209px] top-[118px] text-[#666] text-[20px] leading-[26px] whitespace-nowrap">南京迈力特力数字科技有限公司</div>
  </div>
)

// ---- taskbar ----
const TaskBtn = ({ children, active, plain }) => (
  <div className="w-[49px] h-full flex justify-center shrink-0">
    <div className={`h-full flex items-center justify-center ${active ? 'w-[48px] bg-[#2f3c42]' : 'w-[40px]'} ${plain ? '' : 'border-b-2 border-[#8ab4d8]'}`}>{children}</div>
  </div>
)

const TraySlot = ({ children, cls = 'w-[24px]' }) => (
  <div className={`shrink-0 flex justify-center ${cls}`}>{children}</div>
)

const App = () => (
  <div className="relative w-[1728px] h-[1080px] overflow-hidden bg-[#eeeef2] flex flex-col text-[#333] font-['Noto_Sans','Noto_Sans_CJK_SC',sans-serif]">
    {/* title + tabs */}
    <div className="h-[52px] shrink-0 relative text-[11px]">
      <div className="h-[26px] flex">
        <div className="w-[24px] h-[6px] bg-[#14b383]" />
        <div className="w-[44px] h-[27px] bg-[#cfe0f3] border-t-[4px] border-[#2a5a9e] text-center leading-[24px] text-[#4a6a8a] text-[12px]">环境</div>
        <div className="ml-[661px] pt-[2px] flex items-center text-[12px] text-[#666] whitespace-nowrap">系统 A,B -</div>
        <div className="ml-[163px] pt-[2px] flex items-center text-[11px] text-[#666]">Enterprise]</div>
        <div className="ml-auto w-[24px] h-[6px] bg-[#14b383]" />
      </div>
      <div className="h-[26px] flex items-center text-[12px] text-[#444] whitespace-nowrap">
        <span className="w-[8px] mt-[4px] overflow-hidden flex justify-end"><span className="shrink-0">项</span></span>
        <div className="ml-[11px] w-[48px] h-[26px] bg-[#fafafa] border-x border-t border-[#d0d0d4] text-center leading-[30px]">环境</div>
        <span className="ml-[16px] mt-[4px]">显示</span>
        <span className="ml-[27px] mt-[4px]">选择</span>
        <span className="ml-[28px] mt-[4px]">自动化</span>
        <div className="ml-auto mb-[4px] w-[133px] h-[20px] bg-white border border-[#d8d8dc] pl-[4px] leading-[18px] text-[#aaa] text-[11px]">快速</div>
      </div>
      <div className="absolute left-[783px] top-0 w-[161px] h-[24px] bg-[#3c4452] rounded-b-[5px] flex items-center text-white text-[12px] whitespace-nowrap">
        <div className="ml-[7px]"><Svg w={18} h={14}><rect x="0" y="8" width="4" height="6" fill="#12a05c" /><rect x="7" y="4" width="4" height="10" fill="#12a05c" /><rect x="14" y="0" width="4" height="14" fill="#12a05c" /></Svg></div>
        <span className="ml-[10px] text-[#e8eaee]">您正在共享屏幕</span>
        <div className="ml-[9px] w-px h-[12px] bg-[#6a7280]" />
        <div className="ml-[8px]"><Svg w={18} h={14}><path d="M4 13a4 4 0 0 1 0-8 5 5 0 0 1 9-1 4.500 4.500 0 0 1 1 9z" fill="#fff" /><circle cx="13" cy="9" r="4" fill="#e0604f" /></Svg></div>
      </div>
    </div>
    <div className="h-px bg-[#c8c8cc] shrink-0" />
    <Ribbon />

    <div className="flex-1 flex min-h-0">
      <LeftPanel />
      <div className="flex-1 flex flex-col min-w-0">
        <Toolbar />
        <Viewport />
      </div>
    </div>

    {/* status bar */}
    <div className="h-[21px] shrink-0 bg-[#0a6fc4] text-white text-[12px] flex items-center whitespace-nowrap">
      <div className="ml-[1327px] w-[16px]"><Svg w={16} h={16}><path d="M1 5h11v7H6l-3 3v-3H1z" fill="#f2d98a" /><circle cx="9" cy="5" r="5" fill="#1a2a8a" stroke="#fff" strokeWidth="0.800" /><path d="M9 3v1M9 5v3" stroke="#fff" /></Svg></div>
      <span className="ml-[2px]">2 消息</span>
      <span className="ml-[18px]">无选择</span>
      <div className="ml-[22px]"><Svg w={8} h={5}><path d="M4 0l4 5H0z" fill="#fff" /></Svg></div>
      <span className="ml-[6px]">度量标准（mm、kg、N、s、mV、mA）</span>
      <span className="ml-[16px]">度</span>
    </div>

    {/* taskbar */}
    <div className="h-[40px] shrink-0 bg-[#1c2a30] flex relative overflow-hidden">
      <div className="w-[295px] h-full bg-[#f0f0f0] text-[14px] text-[#333] flex items-center whitespace-nowrap overflow-hidden"><span className="-ml-[8px]">在这里输入你要搜索的内容</span></div>
      <div className="w-[3px]" />
      <TaskBtn plain><Svg w={26} h={30}><path d="M3 17C1 9 9 6 15 8c6 2 7 9 4 13-3 5-13 6-16-4z" fill="#dfe6ea" /><circle cx="8" cy="13" r="2" fill="#c0392b" /><circle cx="13" cy="11" r="2" fill="#2f6ea6" /><circle cx="17" cy="15" r="2" fill="#2fa35a" /><path d="M15 12L24 1" stroke="#c9a67a" strokeWidth="2.500" /></Svg></TaskBtn>
      <TaskBtn plain><Svg w={18} h={32}><rect x="0" y="0" width="18" height="32" fill="#3a6a94" /><rect x="2" y="2" width="14" height="7" fill="#8cc4ea" /><path d="M3 12h3v3H3zM8 12h3v3H8zM13 12h3v3h-3zM3 17h3v3H3zM8 17h3v3H8zM13 17h3v3h-3zM3 22h3v3H3zM8 22h3v3H8zM13 22h3v3h-3zM3 27h3v3H3zM8 27h3v3H8z" fill="#dfe6ea" /></Svg></TaskBtn>
      <TaskBtn><Svg w={22} h={24}><path d="M0 1h9l2 3h11v19H0z" fill="#e8b93a" /><rect x="0" y="8" width="22" height="15" fill="#f3cf5c" /><rect x="5" y="15" width="12" height="8" fill="#4a90c2" /></Svg></TaskBtn>
      <TaskBtn><Svg w={22} h={26}><rect x="0" y="0" width="22" height="26" rx="3" fill="#1a78e0" /><path d="M5 17l4-6 2 3 2-3 4 6-4-2-2 1-2-1z" fill="#fff" /></Svg></TaskBtn>
      <TaskBtn><Svg w={24} h={26}><path d="M12 1c4 0 5 3 5 5 3-1 6 2 6 6s-3 6-5 6c0 4-3 7-6 7s-6-3-6-7c-3 0-5-2-5-6s3-7 6-6c0-2 1-5 5-5z" fill="#e6f2ee" stroke="#9fcdbd" /><path d="M7 14l3-2 2 2 3-3 2 2" stroke="#4a7ab0" fill="none" /></Svg></TaskBtn>
      <TaskBtn>
        <div className="w-[24px] h-[32px] bg-black flex flex-col items-center text-white text-[10px] leading-[10px] font-bold">
          <Svg w={18} h={21}><path d="M9 1l3 3-3 3-3-3zM5 7l3 3-3 3-3-3zM13 7l3 3-3 3-3-3zM9 13l3 3-3 3-3-3z" fill="none" stroke="#d9a25a" strokeWidth="1.300" /></Svg>
          WB
        </div>
      </TaskBtn>
      <TaskBtn active>
        <div className="w-[24px] h-[32px] bg-black flex flex-col items-center text-white text-[10px] leading-[10px] font-bold">
          <Svg w={18} h={21}><circle cx="6" cy="13" r="4" fill="none" stroke="#d9a25a" strokeWidth="2.500" /><circle cx="14" cy="5" r="3" fill="none" stroke="#d9a25a" strokeWidth="2" /></Svg>
          M
        </div>
      </TaskBtn>
      <div className="ml-auto w-[208px] flex items-center text-white shrink-0 overflow-hidden">
        <TraySlot><ChevronUp size={18} strokeWidth={1.500} color="#fff" /></TraySlot>
        <TraySlot><Svg w={16} h={16}><path d="M13 4a6 6 0 1 0-2 9" stroke="#3b82c4" strokeWidth="2.200" fill="none" /><circle cx="11" cy="10" r="2" fill="#c9a227" /></Svg></TraySlot>
        <TraySlot><Svg w={14} h={18}><rect x="4" y="0" width="6" height="12" rx="3" fill="#dfe6ea" /><path d="M1 8a6 6 0 0 0 12 0M7 14v3M3 17h8" stroke="#dfe6ea" fill="none" /></Svg></TraySlot>
        <TraySlot><Svg w={17} h={15}><rect x="2" y="1" width="14" height="10" fill="none" stroke="#fff" /><rect x="0" y="0" width="7" height="5" fill="#1c2a30" stroke="#fff" /><path d="M9 11v3M5 14h8" stroke="#fff" /></Svg></TraySlot>
        <TraySlot><Svg w={15} h={13}><path d="M1 4h3l4-3v11L4 9H1z" fill="none" stroke="#fff" /><path d="M10 4l4 4M14 4l-4 4" stroke="#ccc" /></Svg></TraySlot>
        <TraySlot cls="w-[24px] text-[14px]">中</TraySlot>
        <TraySlot cls="ml-[4px] w-[24px]"><div className="w-[16px] h-[16px] rounded-[4px] bg-[#d4602a] text-white text-[14px] leading-[16px] text-center font-bold rotate-[-8deg]">S</div></TraySlot>
        <div className="pl-[9px] shrink-0 text-[12px] leading-[19px] whitespace-nowrap"><div className="ml-[18px]">20:16</div><div>2023/6/8</div></div>
      </div>
      <div className="absolute left-0 bottom-0 w-[24px] h-[6px] bg-[#14b383]" />
      <div className="absolute right-0 bottom-0 w-[24px] h-[6px] bg-[#14b383]" />
    </div>

    {/* cursor over the details table */}
    <div className="absolute left-0 top-[724px]">
      <Svg w={13} h={20}><path d="M0 0v15l3-3 3 7 2-1-3-7h5z" fill="#fff" stroke="#111" /></Svg>
    </div>
    <Watermark />
  </div>
)

export default App
